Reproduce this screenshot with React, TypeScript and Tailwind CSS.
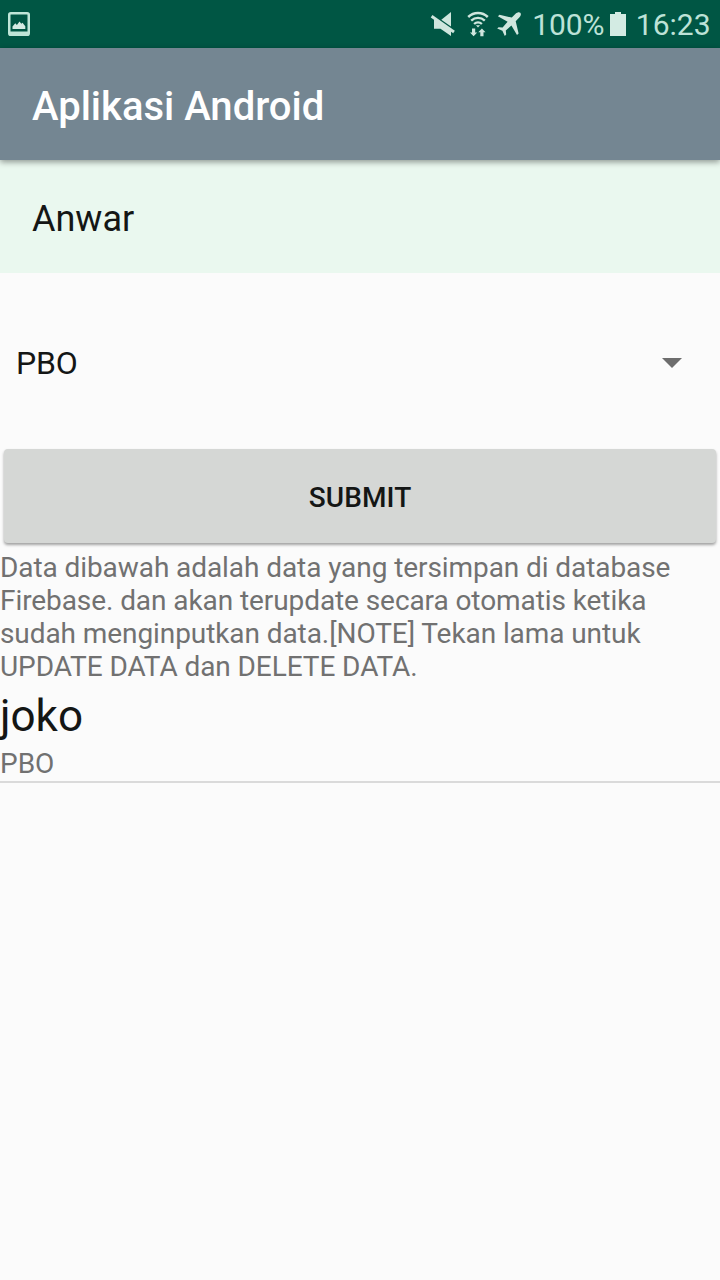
import React from "react";

function PictureIcon() {
  return (
    <svg className="h-6 w-[22px]" viewBox="0 0 22 24" fill="none">
      <rect x="1.25" y="1.25" width="19.5" height="21.5" rx="1.6" stroke="#bfe6d8" strokeWidth="2.5" />
      <path d="M1 19.5h20v3.5H1z" fill="#bfe6d8" />
      <path d="M4.5 17v-2.5l2.8-3.2 1.6 1.6 2.6-3.4 1.8 2.2 1.2-.9 2.8 3.4V17z" fill="#d5ebe3" />
    </svg>
  );
}

function MuteIcon() {
  return (
    <svg className="h-6 w-[25px]" viewBox="0 0 25 24" fill="#cfe6de">
      <path d="M21 0v14.600L11.300 7.800z" />
      <path d="M4 6.500h2L21 18v6L10.500 16.800H4z" />
      <path d="M1.600 4.300 24 20" stroke="#cfe6de" strokeWidth="2.900" />
    </svg>
  );
}

function WifiIcon() {
  return (
    <svg className="h-[26px] w-[22px]" viewBox="0 0 22 26" fill="none" stroke="#cfe6de">
      <path d="M1.200 6C6.800.8 15.200.8 20.800 6" strokeWidth="2.500" />
      <path d="M4.200 9.600c4-3.700 9.600-3.700 13.600 0" strokeWidth="2.400" />
      <path d="M7.100 13c2.300-2.100 5.500-2.100 7.800 0" strokeWidth="2.300" />
      <path d="M8.900 14.300h4.200L11 16.600z" fill="#cfe6de" stroke="none" />
      <path d="M5 17.500h3.200v3.900h2L6.600 25.200 3 21.400h2zM13.300 25.200h3.200v-3.900h2l-3.600-3.900-3.600 3.900h2z" fill="#cfe6de" stroke="none" />
    </svg>
  );
}

function PlaneIcon() {
  return (
    <svg className="h-6 w-6" viewBox="0 0 24 24" fill="#cfe6de">
      <path d="M23.300.7c-1.100-1.100-3.100-.5-4.500.9L14.800 5.600 2.500 2.700.9 4.300l9.700 5.500-5 5.800-4-.4L.2 16.500l5.200 2.300 2.400 5.100 1.400-1.400-.4-3.900 5.600-5.100 5.600 9.600 1.600-1.600-2.900-12.200 3.800-4.100c1.400-1.400 1.900-3.400.8-4.500z" />
    </svg>
  );
}

function BatteryIcon() {
  return (
    <svg className="h-6 w-4" viewBox="0 0 16 24" fill="#d3ebe3">
      <path d="M5 0h6v2h5v22H0V2h5z" />
    </svg>
  );
}

function StatusBar() {
  return (
    <div className="flex h-12 items-center bg-[#005644] pl-2 pr-[9.5px] text-[30px] leading-[46px] text-[#bde2d7]">
      <PictureIcon />
      <div className="ml-auto flex items-center">
        <MuteIcon />
        <div className="ml-[12px] mr-[8px]">
          <WifiIcon />
        </div>
        <PlaneIcon />
        <span className="ml-[11.5px] pt-[2px] tracking-[-0.1px]">100%</span>
        <div className="ml-[6px] mr-[9.5px]">
          <BatteryIcon />
        </div>
        <span className="pt-[2px]">16:23</span>
      </div>
    </div>
  );
}

export default function App() {
  return (
    <div className="flex h-[1280px] w-[720px] flex-col overflow-hidden bg-[#fbfbfb] font-['Roboto',sans-serif] text-[#141615]">
      <StatusBar />
      <header className="z-10 flex h-28 shrink-0 items-center bg-[#748692] px-8 pt-[6px] shadow-[0_2px_6px_rgba(0,0,0,0.4)]">
        <h1 className="text-[40px] font-medium leading-[48px] text-white">Aplikasi Android</h1>
      </header>
      <div className="flex h-[113px] shrink-0 items-center bg-[#eaf8ef] px-8 pt-1">
        <span className="text-[36px] leading-[44px]">Anwar</span>
      </div>
      <div className="mt-[58px] flex h-16 shrink-0 items-center justify-between pl-4 pr-[38px]">
        <span className="text-[32px] leading-[38px] tracking-[-0.2px]">PBO</span>
        <svg className="h-[10px] w-5" viewBox="0 0 20 10">
          <path d="M0 0h20L10 10z" fill="#6d6d6d" />
        </svg>
      </div>
      <button className="mx-1 mt-[54px] flex h-[94px] shrink-0 items-center justify-center rounded-[4px] bg-[#d5d7d5] pt-[3px] text-[28px] font-medium leading-[33px] tracking-[0.1px] shadow-[0_2px_3px_rgba(0,0,0,0.36)]">
        SUBMIT
      </button>
      <p className="mt-2 text-[28px] leading-[33px] tracking-[-0.08px] text-[#717171]">
        Data dibawah adalah data yang tersimpan di database
        <br />
        Firebase. dan akan terupdate secara otomatis ketika
        <br />
        sudah menginputkan data.[NOTE] Tekan lama untuk
        <br />
        UPDATE DATA dan DELETE DATA.
      </p>
      <div className="mt-[7px] border-b-2 border-[#dadada]">
        <div className="text-[44px] leading-[52px]">joko</div>
        <div className="mt-[5px] pb-px text-[28px] leading-[33px] text-[#717171]">PBO</div>
      </div>
    </div>
  );
}
